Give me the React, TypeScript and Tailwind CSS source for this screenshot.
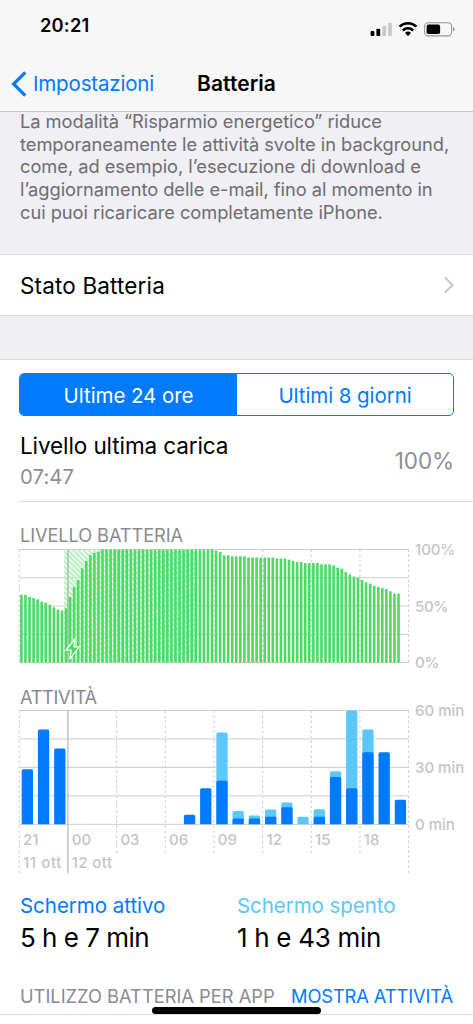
import { ReactNode } from "react";

const AXIS_LEFT = 19.3;
const AXIS_RIGHT = 408.6;
const STEP = (AXIS_RIGHT - AXIS_LEFT) / 8;

// battery level every 15 minutes
const levels: number[] = [
  60, 60, 58, 57, 56, 54, 53, 51, 49, 47, 46, 48, 58, 67, 73, 83.5, 90, 95, 97,
  98,
  ...Array(28).fill(100),
  99, 98, 95, 95, 94, 94, 94, 94, 93, 93, 93, 93, 93, 93, 93, 92, 92, 92, 91,
  90, 89, 89, 88, 88, 88, 88, 87, 87, 87, 86, 84, 83, 80, 78, 76, 75, 73, 71,
  70, 68, 67, 66, 65, 63, 61, 61,
];

// minutes per hour: [screen on, total]
const activity: number[][] = [
  [29, 29], [50, 50], [40, 40], [0, 0], [0, 0], [0, 0], [0, 0], [0, 0],
  [0, 0], [0, 0], [5, 5], [19, 19], [23, 48.4], [3, 7], [3, 4.6], [4, 7.8],
  [9, 11.5], [0, 4], [4, 8], [25, 28], [19, 60], [38, 50], [38, 38], [13, 13],
];

const hours = ["21", "00", "03", "06", "09", "12", "15", "18"];

const Grid = ({ top, bottom }: { top: number; bottom: number }) => (
  <g stroke="#cdcdd0" strokeWidth="1">
    {[0, 1, 2, 3, 4].map((i) => {
      const y = top + ((bottom - top) / 4) * i;
      return <line key={i} x1={AXIS_LEFT} x2={AXIS_RIGHT} y1={y} y2={y} />;
    })}
  </g>
);

const BatteryChart = () => {
  const top = 549.5;
  const bottom = 662.5;
  return (
    <svg
      className="block h-[128px] w-[473px] overflow-visible font-medium"
      viewBox="0 547 473 128"
    >
      <defs>
        <pattern
          id="hatch"
          width="3.6"
          height="3.6"
          patternUnits="userSpaceOnUse"
          patternTransform="rotate(-45)"
        >
          <rect width="2.3" height="3.6" fill="#b9f1c3" />
        </pattern>
      </defs>
      <Grid top={top} bottom={bottom} />
      {[0, 2, 3, 4, 5, 6, 7, 8].map((i) => (
        <line
          key={i}
          x1={AXIS_LEFT + STEP * i}
          x2={AXIS_LEFT + STEP * i}
          y1={top}
          y2={bottom}
          stroke="#cdcdd0"
          strokeDasharray="2.5 2.5"
        />
      ))}
      <rect x="64" y={top} width="131" height={bottom - top} fill="url(#hatch)" />
      <line x1="67.9" x2="67.9" y1={top} y2={bottom} stroke="#a9b5ab" strokeWidth="1.3" />
      {levels.map((level, i) => {
        const h = ((bottom - top) * level) / 100;
        return (
          <rect
            key={i}
            x={AXIS_LEFT + 0.8 + i * 4.055}
            y={bottom - h}
            width="2.6"
            height={h}
            rx="0.6"
            fill="#4cd964"
          />
        );
      })}
      <path
        d="M75.2 638.5 L66 650.2 H71.3 L69.8 658.8 L79.2 646.8 H73.8 Z"
        fill="#4cd964"
        stroke="#fff"
        strokeWidth="1.3"
        strokeLinejoin="round"
      />
      <g fill="#c3c3c8" fontSize="15">
        <text x="415" y="555" letterSpacing="-0.1">100%</text>
        <text x="415" y="611.7" letterSpacing="-0.2">50%</text>
        <text x="415" y="668.3" letterSpacing="-0.3">0%</text>
      </g>
    </svg>
  );
};

const ActivityChart = () => {
  const top = 710.5;
  const bottom = 824.3;
  return (
    <svg
      className="block h-[168px] w-[473px] overflow-visible font-medium"
      viewBox="0 709 473 168"
    >
      <Grid top={top} bottom={bottom} />
      {[0, 2, 3, 4, 5, 6, 7, 8].map((i) => (
        <line
          key={i}
          x1={AXIS_LEFT + STEP * i}
          x2={AXIS_LEFT + STEP * i}
          y1={top}
          y2={i % 8 === 0 ? 873.5 : 853}
          stroke="#cdcdd0"
          strokeDasharray="2.5 2.5"
        />
      ))}
      <line x1="67.9" x2="67.9" y1={top} y2="873.5" stroke="#bcbcc0" strokeWidth="1.3" />
      {activity.map(([on, total], i) => {
        const x = 21.7 + i * 16.22;
        const bar = (minutes: number) => {
          const y = bottom - ((bottom - top) * minutes) / 60;
          return `M${x} ${bottom} V${y + 1.5} q0 -1.5 1.5 -1.5 h8.3 q1.5 0 1.5 1.5 V${bottom} Z`;
        };
        return (
          <g key={i}>
            {total > on && <path d={bar(total)} fill="#5ac8fa" />}
            {on > 0 && <path d={bar(on)} fill="#007aff" />}
          </g>
        );
      })}
      <g fill="#c3c3c8" fontSize="15">
        <text x="415" y="716.3">60 min</text>
        <text x="415" y="773">30 min</text>
        <text x="415" y="829.7">0 min</text>
        {hours.map((hour, i) => (
          <text key={hour} x={23.1 + STEP * i} y="845">
            {hour}
          </text>
        ))}
        <text x="23" y="868" letterSpacing="0.6">11 ott</text>
        <text x="71.7" y="868" letterSpacing="0.4">12 ott</text>
      </g>
    </svg>
  );
};

const Title = ({ children }: { children: ReactNode }) => (
  <h2 className="h-6 pl-5 text-[18.3px]/[24px] text-[#8a8a8f]">{children}</h2>
);

const StatusIcons = () => (
  <svg className="h-[20px] w-[90px]" viewBox="368 19 90 20">
    <rect x="370.6" y="31" width="3.8" height="5" rx="1" />
    <rect x="376.4" y="28.7" width="3.8" height="7.3" rx="1" />
    <rect x="382.3" y="25.7" width="3.8" height="10.3" rx="1" fill="#c9c9cb" />
    <rect x="388.1" y="22.7" width="3.8" height="13.3" rx="1" fill="#c9c9cb" />
    <g fill="none" stroke="#000" strokeWidth="2.5">
      <path d="M399.5 26.7 a12.2 12.2 0 0 1 17 0" />
      <path d="M402.8 30.5 a7.4 7.4 0 0 1 10.4 0" />
    </g>
    <path d="M405 33 a4.4 4.4 0 0 1 6 0 L408 36 Z" />
    <rect x="424.6" y="22.7" width="27" height="13.2" rx="3.6" fill="none" stroke="#98989b" strokeWidth="1.1" />
    <rect x="426.6" y="24.6" width="13.5" height="9.5" rx="1.8" />
    <path d="M453 27 q1.6 0.6 1.6 2.3 t-1.6 2.3 Z" fill="#98989b" />
  </svg>
);

const App = () => {
  return (
    <div className="relative h-[1024px] w-[473px] overflow-hidden bg-white font-['Inter',sans-serif] text-black">
      <header className="relative z-10 border-b border-[#c8c8cd] bg-[#f7f7f8]">
        <div className="flex h-[52px] items-center justify-between pr-[15px] pl-10">
          <span className="text-[18.3px] font-semibold tracking-[0.2px]">20:21</span>
          <div className="pt-[6px]">
            <StatusIcons />
          </div>
        </div>
        <div className="grid h-[59px] grid-cols-[1fr_80px_1fr] items-center pt-[5px]">
          <div className="flex items-center pl-[11px] text-[#007aff]">
            <svg className="mr-[6px] h-[28px] w-4 shrink-0" viewBox="0 0 16 28">
              <path
                d="M14.3 2.3 L2.6 14 L14.3 25.7"
                fill="none"
                stroke="currentColor"
                strokeWidth="3.2"
              />
            </svg>
            <span className="text-[20.5px] tracking-[-0.17px]">Impostazioni</span>
          </div>
          <h1 className="text-center text-[21px] font-semibold tracking-[0.05px] whitespace-nowrap">
            Batteria
          </h1>
        </div>
      </header>

      <div className="flow-root h-[143px] border-b border-[#dcdce0] bg-[#efeff4]">
        <p className="-mt-[2px] pl-5 text-[18.3px]/[22.7px] tracking-[-0.04px] whitespace-nowrap text-[#6d6d72]">
          La modalità “Risparmio energetico” riduce
          <br />
          temporaneamente le attività svolte in background,
          <br />
          come, ad esempio, l’esecuzione di download e
          <br />
          l’aggiornamento delle e-mail, fino al momento in
          <br />
          cui puoi ricaricare completamente iPhone.
        </p>
      </div>

      <div className="flex h-[61px] items-center justify-between border-b border-[#dcdce0] pr-[18px] pl-5">
        <span className="pt-[2px] text-[22.5px] tracking-[0.15px]">Stato Batteria</span>
        <svg className="h-[18px] w-3" viewBox="0 0 12 18">
          <path d="M2 1.5 L9.5 9 L2 16.5" fill="none" stroke="#c7c7cc" strokeWidth="2" />
        </svg>
      </div>
      <div className="h-11 border-b border-[#dcdce0] bg-[#efeff4]" />

      <div className="mt-[13px] mr-[19px] ml-[19px] flex h-[43px] overflow-hidden rounded-[5px] border border-[#007aff] text-[20.5px] tracking-[-0.07px]">
        <button className="w-[217px] bg-[#007aff] pt-[3px] text-white">Ultime 24 ore</button>
        <button className="flex-1 pt-[3px] text-[#007aff]">Ultimi 8 giorni</button>
      </div>

      <div className="ml-[19px] flex h-[86px] items-center justify-between border-b border-[#dcdce0] pt-1 pr-[19px] pl-px">
        <div>
          <p className="text-[22.5px]/[31px] tracking-[-0.1px]">Livello ultima carica</p>
          <p className="text-[20.3px]/[31px] tracking-[0.1px] text-[#8e8e93]">07:47</p>
        </div>
        <span className="text-[22.5px] tracking-[-0.1px] text-[#8e8e93]">100%</span>
      </div>

      <div className="pt-[21px] tracking-[-0.13px]">
        <Title>LIVELLO BATTERIA</Title>
        <BatteryChart />
      </div>
      <div className="pt-[10px]">
        <div className="tracking-[-0.4px]">
          <Title>ATTIVITÀ</Title>
        </div>
        <ActivityChart />
      </div>

      <div className="grid grid-cols-[217px_1fr] pt-[13px] pl-5">
        <div>
          <p className="text-[20.5px]/[31px] tracking-[-0.03px] text-[#007aff]">Schermo attivo</p>
          <p className="text-[26px]/[33px] tracking-[-0.5px]">5 h e 7 min</p>
        </div>
        <div>
          <p className="text-[20.5px]/[31px] tracking-[-0.06px] text-[#5ac8fa]">Schermo spento</p>
          <p className="text-[26px]/[33px] tracking-[-0.3px]">1 h e 43 min</p>
        </div>
      </div>

      <div className="mt-[30px] flex h-[31px] justify-between border-b border-[#dcdce0] pr-5 pl-5 text-[18.3px]/[24px] whitespace-nowrap">
        <span className="tracking-[0px] text-[#8a8a8f]">UTILIZZO BATTERIA PER APP</span>
        <span className="tracking-[-0.1px] text-[#007aff]">MOSTRA ATTIVITÀ</span>
      </div>

      <div className="absolute bottom-[10px] left-[152px] h-[7px] w-[169px] rounded-full bg-black" />
    </div>
  );
};

export default App;
